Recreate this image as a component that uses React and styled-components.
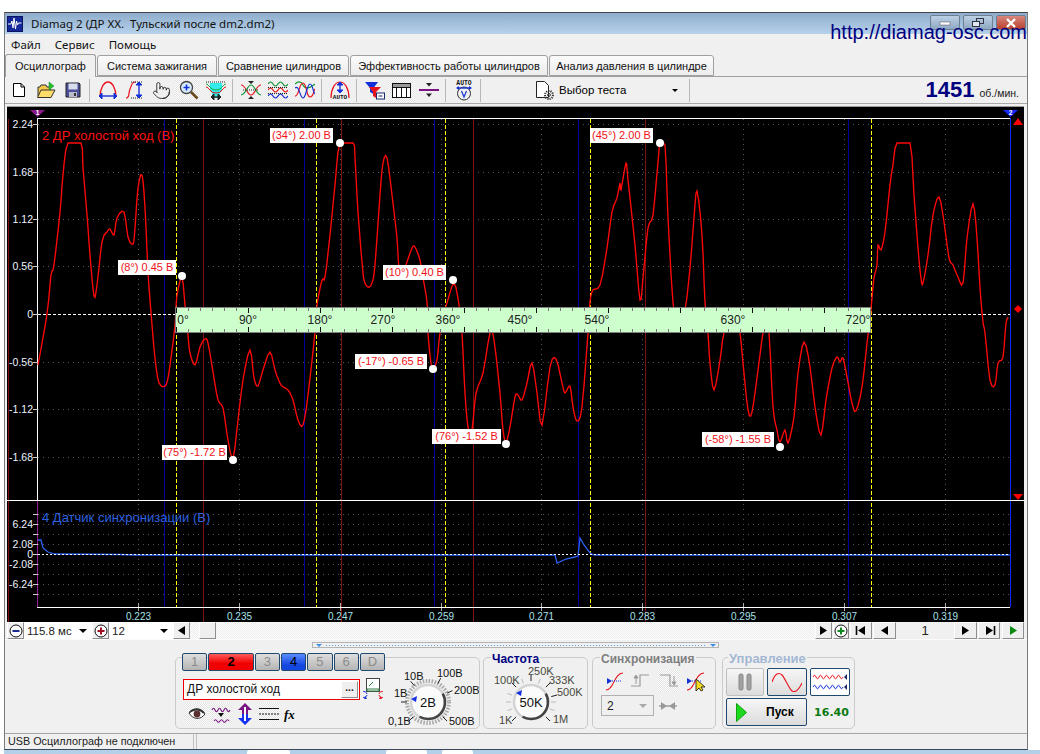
import React from "react";
import styled, { createGlobalStyle } from "styled-components";
import { Pointer } from "lucide-react";

const GlobalStyle = createGlobalStyle`
  html, body { margin: 0; padding: 0; background: #fff; }
  body { font-family: "Liberation Sans", Arial, sans-serif; font-size: 12px; color: #000; }
`;

const Page = styled.div`
  width: 1040px;
  height: 754px;
  overflow: hidden;
  padding-top: 12px;
  box-sizing: border-box;
  position: relative;
`;

const Window = styled.div`
  position: relative;
  margin-left: 4px;
  width: 1024px;
  height: 738px;
  box-sizing: border-box;
  border: 1px solid #7a7a7a;
  border-top-color: #444;
  border-bottom-color: #3a4a5a;
  background: #f0f0f0;
  display: flex;
  flex-direction: column;
`;

const TitleBar = styled.div`
  height: 21px;
  flex: none;
  display: flex;
  align-items: center;
  padding-left: 2px;
  background: linear-gradient(#8fadcc, #b6d1ea);
  font-family: "Noto Sans", sans-serif;
  font-size: 11.5px;
  color: #111;
`;
const TitleText = styled.span`
  margin-left: 8px;
  white-space: pre;
`;
const WinButtons = styled.div`
  position: absolute;
  top: 2px;
  right: 1px;
  display: flex;
  gap: 3px;
`;
const WinButton = styled.div`
  width: 30px;
  height: 15px;
  box-sizing: border-box;
  border: 1px solid #6d7f92;
  border-radius: 2px;
  display: flex;
  align-items: center;
  justify-content: center;
  background: ${(p) => (p.$close ? "linear-gradient(#d8867c, #b84030)" : "linear-gradient(#bcd0e4, #8ea8c2)")};
`;
const SiteUrl = styled.div`
  position: absolute;
  top: 7px;
  right: 0;
  font-size: 20px;
  line-height: 24px;
  color: #000080;
`;

const Menu = styled.div`
  height: 21px;
  flex: none;
  display: flex;
  align-items: center;
  gap: 14px;
  padding-left: 6px;
  font-family: "Noto Sans", sans-serif;
  font-size: 11.5px;
  color: #111;
`;

const Tabs = styled.div`
  height: 22px;
  flex: none;
  display: flex;
  align-items: flex-end;
  gap: 1px;
  box-sizing: border-box;
  border-bottom: 1px solid #a0a0a0;
`;
const Tab = styled.div`
  width: ${(p) => p.$w}px;
  height: ${(p) => (p.$active ? 23 : 21)}px;
  margin-bottom: ${(p) => (p.$active ? -1 : 0)}px;
  box-sizing: border-box;
  border: 1px solid #a0a0a0;
  border-bottom: ${(p) => (p.$active ? "none" : "1px solid #a0a0a0")};
  border-radius: 3px 3px 0 0;
  background: ${(p) => (p.$active ? "#f0f0f0" : "linear-gradient(#fbfbfb, #ececec)")};
  display: flex;
  align-items: center;
  justify-content: center;
  font-size: 11px;
  white-space: nowrap;
  color: #111;
`;

const Toolbar = styled.div`
  height: 27px;
  flex: none;
  display: flex;
  align-items: center;
  box-sizing: border-box;
  border-bottom: 1px solid #a8a8a8;
`;
const Tool = styled.div`
  width: 27px;
  height: 25px;
  flex: none;
  display: flex;
  align-items: center;
  justify-content: center;
  background: ${(p) => (p.$pressed ? "repeating-conic-gradient(#fff 0 25%, #e2e2e2 0 50%) 0 0 / 2px 2px" : "none")};
`;
const Sep = styled.div`
  width: 1px;
  height: 23px;
  flex: none;
  margin: 0 4px 0 3px;
  background: #b8b8b8;
`;
const TestPicker = styled.div`
  width: 201px;
  flex: none;
  display: flex;
  align-items: center;
  padding-left: 50px;
  box-sizing: border-box;
  gap: 3px;
  font-size: 11.5px;
`;
const Caret = styled.span`
  width: 0;
  height: 0;
  border-left: ${(p) => p.$s || 3}px solid transparent;
  border-right: ${(p) => p.$s || 3}px solid transparent;
  border-top: ${(p) => p.$s || 3}px solid ${(p) => p.$c || "#000"};
  display: block;
`;
const PickerCaret = styled.div`
  margin-left: auto;
  margin-right: 8px;
`;
const Rpm = styled.div`
  flex: 1;
  display: flex;
  justify-content: flex-end;
  align-items: baseline;
  gap: 5px;
  padding-right: 8px;
  font-size: 10.5px;
  color: #222;
`;
const RpmValue = styled.span`
  font-size: 22px;
  font-weight: 700;
  color: #000080;
  line-height: 26px;
`;

const ChartFrame = styled.div`
  position: relative;
  height: 516px;
  flex: none;
  margin: 2px 3px 0 2px;
  box-sizing: border-box;
  border-top: 1px solid #9a9a9a;
  background: #000;
`;
const ChartSvg = styled.svg`
  display: block;
  font-family: "Liberation Sans", Arial, sans-serif;
`;
const Callout = styled.div`
  position: absolute;
  left: ${(p) => p.$x - 7}px;
  top: ${(p) => p.$y - 107}px;
  width: ${(p) => p.$w}px;
  height: 15px;
  background: #fff;
  color: #f01018;
  font-size: 11px;
  line-height: 15px;
  text-align: center;
  white-space: nowrap;
`;
const TraceTitle = styled.div`
  position: absolute;
  left: 35px;
  top: ${(p) => p.$y - 107}px;
  font-size: 13px;
  line-height: 16px;
  color: ${(p) => p.$c};
  white-space: nowrap;
`;

const NavRow = styled.div`
  height: 18px;
  flex: none;
  display: flex;
  align-items: center;
  box-sizing: border-box;
  padding: 0 3px 0 2px;
  border-bottom: 1px solid #fbfbfb;
`;
const NavButton = styled.div`
  width: ${(p) => p.$w || 17}px;
  height: 17px;
  flex: none;
  margin-left: ${(p) => p.$ml || 0}px;
  box-sizing: border-box;
  background: #efefef;
  border: 1px solid;
  border-color: #fff #8e8e8e #8e8e8e #fff;
  display: flex;
  align-items: center;
  justify-content: center;
`;
const SizeSelect = styled.div`
  width: ${(p) => p.$w}px;
  height: 17px;
  flex: none;
  display: flex;
  align-items: center;
  justify-content: space-between;
  box-sizing: border-box;
  padding: 0 5px 0 3px;
  background: #fff;
  font-size: 11.5px;
  color: #222;
`;
const Track = styled.div`
  flex: 1;
  height: 17px;
  padding-left: 9px;
  background: repeating-conic-gradient(#fff 0 25%, #ececec 0 50%) 0 0 / 2px 2px;
`;
const PageNum = styled.div`
  width: 58px;
  flex: none;
  text-align: center;
  font-size: 13px;
  color: #222;
`;

const Panel = styled.div`
  height: 93px;
  flex: none;
`;
const Splitter = styled.div`
  margin: 2px 0 0 307px;
  width: 407px;
  height: 6px;
  box-sizing: border-box;
  border: 1px solid #b4b4b4;
  display: flex;
  align-items: center;
  justify-content: space-between;
  padding: 0 2px 0 3px;
  gap: 4px;
`;
const SplitDots = styled.div`
  flex: 1;
  height: 1px;
  background: repeating-linear-gradient(90deg, #6aa0e0 0 1px, transparent 1px 3px);
`;
const Groups = styled.div`
  display: flex;
  margin: 9px 0 0 170px;
`;
const Group = styled.div`
  position: relative;
  width: ${(p) => p.$w}px;
  height: 72px;
  margin-left: ${(p) => p.$ml || 0}px;
  box-sizing: border-box;
  border: 1px solid #cbcbcb;
  border-radius: 5px;
`;
const Legend = styled.div`
  position: absolute;
  left: ${(p) => p.$x}px;
  top: -6px;
  padding: 0 1px;
  background: #f0f0f0;
  font-size: ${(p) => p.$fs || 12}px;
  line-height: 14px;
  font-weight: 700;
  color: ${(p) => p.$c};
  white-space: nowrap;
`;
const ChannelGroup = styled(Group)`
  display: flex;
`;
const ChannelCol = styled.div`
  width: 209px;
  flex: none;
  padding-left: 6px;
  box-sizing: border-box;
`;
const ChannelRow = styled.div`
  display: flex;
  gap: 1px;
  margin-top: -5px;
`;
const Channel = styled.div`
  width: ${(p) => (p.$wide ? 47 : 26)}px;
  height: 18px;
  box-sizing: border-box;
  border: 1px solid #1d4a6e;
  border-radius: 2px;
  background: ${(p) =>
    p.$color === "red"
      ? "linear-gradient(#ff5a5a, #f00000 60%)"
      : p.$color === "blue"
        ? "linear-gradient(#5a8cff, #1446e0 70%)"
        : "linear-gradient(#dedede, #b4b4b4)"};
  color: ${(p) => (p.$color ? "#000" : "#8c8c8c")};
  font-weight: ${(p) => (p.$color === "red" ? 700 : 400)};
  font-size: 13px;
  line-height: 16px;
  text-align: center;
`;
const NameRow = styled.div`
  display: flex;
  align-items: center;
  margin-top: 7px;
  gap: 3px;
`;
const NameField = styled.div`
  width: 177px;
  height: 21px;
  margin-left: 1px;
  box-sizing: border-box;
  border: 1px solid #f00000;
  background: #fff;
  display: flex;
  align-items: center;
  justify-content: space-between;
  padding: 0 1px 0 3px;
  font-size: 12px;
  color: #111;
`;
const DotsButton = styled.div`
  width: 17px;
  height: 17px;
  box-sizing: border-box;
  background: #efefef;
  border: 1px solid;
  border-color: #fff #8e8e8e #8e8e8e #fff;
  font-size: 10px;
  font-weight: 700;
  line-height: 11px;
  text-align: center;
`;
const IconRow = styled.div`
  display: flex;
  align-items: center;
  gap: 1px;
  margin: 3px 0 0 3px;
`;
const SmallTool = styled(Tool)`
  width: ${(p) => p.$w || 23}px;
  height: 22px;
`;
const KnobSvg = styled.svg`
  display: block;
  flex: none;
  font-family: "Liberation Sans", Arial, sans-serif;
`;
const SyncIcons = styled.div`
  display: flex;
  align-items: center;
  margin: 12px 0 0 12px;
  gap: 6px;
`;
const SyncRow = styled.div`
  display: flex;
  align-items: center;
  gap: 5px;
  margin: 3px 0 0 8px;
`;
const SyncSelect = styled.div`
  width: 53px;
  height: 21px;
  box-sizing: border-box;
  border: 1px solid #b0b0b0;
  display: flex;
  align-items: center;
  justify-content: space-between;
  padding: 0 6px 0 5px;
  font-size: 12px;
  color: #222;
`;
const ControlGrid = styled.div`
  display: grid;
  grid-template-columns: 38px 40px 40px;
  grid-auto-rows: 28px;
  column-gap: 3px;
  row-gap: 2px;
  padding: 10px 0 0 3px;
`;
const ControlButton = styled.div`
  box-sizing: border-box;
  border: 1px solid ${(p) => (p.$off ? "#c0c0c0" : "#1d4a6e")};
  border-radius: 2px;
  background: ${(p) => (p.$wave ? "#fff" : "linear-gradient(#f6f6f6, #dcdcdc)")};
  display: flex;
  align-items: center;
  justify-content: center;
`;
const StartButton = styled(ControlButton)`
  grid-column: span 2;
  justify-content: flex-start;
  gap: 19px;
  padding-left: 9px;
  font-weight: 700;
  font-size: 12px;
`;
const Elapsed = styled.div`
  display: flex;
  align-items: center;
  justify-content: center;
  padding-left: 3px;
  font-family: "DejaVu Sans", sans-serif;
  font-size: 11px;
  font-weight: 700;
  color: #0a7a10;
`;

const StatusBar = styled.div`
  height: 16px;
  flex: 1;
  display: flex;
  box-sizing: border-box;
  border-top: 1px solid #a6a6a6;
  font-size: 10.8px;
  line-height: 15px;
  color: #222;
`;
const StatusCell = styled.div`
  width: 189px;
  flex: none;
  padding-left: 3px;
  border-right: 1px solid #c0c0c0;
  margin-right: 2px;
  box-sizing: border-box;
`;
const StatusRest = styled.div`
  flex: 1;
  border-left: 1px solid #c0c0c0;
`;
const Taskbar = styled.div`
  height: 4px;
  margin-left: 4px;
  display: flex;
  background: #b4cfe8;
`;
const TaskItem = styled.div`
  width: ${(p) => p.$w}px;
  margin-left: ${(p) => p.$ml}px;
  background: #fff;
  border-radius: 2px 2px 0 0;
`;

/* toolbar icons */
const Ic = ({ w = 20, h = 18, children }) => (
  <svg width={w} height={h} viewBox={`0 0 ${w} ${h}`} fill="none" strokeWidth="1">
    {children}
  </svg>
);
const arrowV = (x, y1, y2, c) => (
  <g stroke={c} fill={c}>
    <path d={`M${x} ${y1 + 2}V${y2 - 2}`} strokeWidth="1.4" />
    <path d={`M${x - 3} ${y1 + 3}L${x} ${y1}L${x + 3} ${y1 + 3}z M${x - 3} ${y2 - 3}L${x} ${y2}L${x + 3} ${y2 - 3}z`} />
  </g>
);
const arrowH = (y, x1, x2, c) => (
  <g stroke={c} fill={c}>
    <path d={`M${x1 + 2} ${y}H${x2 - 2}`} strokeWidth="1.4" />
    <path d={`M${x1 + 3} ${y - 3}L${x1} ${y}L${x1 + 3} ${y + 3}z M${x2 - 3} ${y - 3}L${x2} ${y}L${x2 - 3} ${y + 3}z`} />
  </g>
);
const wave = (x, y, n, a, s) => {
  let d = `M${x} ${y}`;
  for (let i = 0; i < n; i++) d += `q${s / 2} ${i % 2 ? a : -a} ${s} 0`;
  return d;
};

const NewIcon = () => (
  <Ic w={14} h={16}>
    <path d="M1.5 1.5h7.5l3.5 3.5v9.5h-11z" fill="#fff" stroke="#000" />
    <path d="M9 1.5v3.5h3.5" stroke="#000" />
  </Ic>
);
const OpenIcon = () => (
  <Ic w={20} h={18}>
    <path d="M2 15V6h2l1-2h5l1 2h3v3" fill="#f4c94a" stroke="#333" />
    <path d="M1.5 16.5L5 9h14l-4 7.5z" fill="#ffdb6a" stroke="#333" />
    <path d="M13 1l5 4-5 4z" fill="#24c22e" stroke="#128018" strokeWidth=".5" />
  </Ic>
);
const SaveIcon = () => (
  <Ic w={16} h={16}>
    <path d="M1 1h13l1 1v13H1z" fill="#4a4f96" stroke="#222" />
    <rect x="3.5" y="1.5" width="9" height="6" fill="#d8dcec" />
    <rect x="4" y="10" width="8" height="5" fill="#b8bccc" />
    <rect x="9" y="11" width="2" height="3" fill="#333" />
  </Ic>
);
const ArcWidthIcon = () => (
  <Ic w={20} h={20}>
    <path d="M2 17C2 8 6 2 10 2s8 6 8 15" stroke="#e8141c" strokeWidth="1.3" />
    {arrowH(16, 1, 19, "#1430d8")}
  </Ic>
);
const RiseHeightIcon = () => (
  <Ic w={20} h={20}>
    <path d="M1 18c4 0 2-4 4-9s2-7 6-7" stroke="#e8141c" strokeWidth="1.2" />
    <path d="M6 2h11M6 18h11" stroke="#222" strokeDasharray="1 1" />
    {arrowV(14, 2, 18, "#1430d8")}
  </Ic>
);
const ZoomIcon = () => (
  <Ic w={20} h={20}>
    <path d="M12 12l6.500 6.500" stroke="#6b4a1e" strokeWidth="2.6" />
    <circle cx="7.5" cy="7.5" r="6" fill="#d8ecfa" stroke="#444" strokeWidth="1.3" />
    <path d="M4.5 7.5h6M7.5 4.5v6" stroke="#1430d8" strokeWidth="1.6" />
  </Ic>
);
const SpanIcon = () => (
  <Ic w={20} h={20}>
    <path d="M4 3h12v7l-2 3v5H6v-5L4 10z" fill="#32ecec" />
    <path d="M0 4c3 0 4 6 10 6s7-6 10-6" stroke="#18a840" />
    <path d="M0 7c3 0 4 6 10 6s7-6 10-6" stroke="#e8141c" />
    <path d="M0 2h20" stroke="#222" strokeDasharray="1 1" />
    {arrowH(17, 5, 15, "#222")}
  </Ic>
);
const CrossIcon = () => (
  <Ic w={20} h={20}>
    <path d="M0 5c5 0 6 10 10 10s5-10 10-10" stroke="#e8141c" strokeWidth="1.2" />
    <path d="M0 15c5 0 6-10 10-10s5 10 10 10" stroke="#109838" strokeWidth="1.2" />
    <path d="M7 1h6l-3 3zM7 19h6l-3-3z" fill="#222" />
    <path d="M2 10h16" stroke="#222" strokeDasharray="1 1" />
  </Ic>
);
const StackIcon = () => (
  <Ic w={20} h={20}>
    <path d={wave(0, 4, 4, 4, 5)} stroke="#109838" strokeWidth="1.2" />
    <path d={wave(0, 10, 4, 4, 5)} stroke="#e8141c" strokeWidth="1.2" />
    <path d={wave(0, 16, 4, 4, 5)} stroke="#1430d8" strokeWidth="1.2" />
    <path d="M0 7.500h20M0 13.500h20" stroke="#222" strokeDasharray="1 1" />
  </Ic>
);
const OverlayIcon = () => (
  <Ic w={20} h={20}>
    <path d="M0 4c3-3 6-3 8 1s6 4 12-1" stroke="#109838" strokeWidth="1.2" />
    <path d="M0 16c4 1 4-13 8-13s3 14 7 14 3-6 5-8" stroke="#e8141c" strokeWidth="1.2" />
    <path d="M0 8c4-4 5 10 8 10s4-14 7-14 3 9 5 10" stroke="#1430d8" strokeWidth="1.2" />
  </Ic>
);
const AutoArcIcon = () => (
  <Ic w={20} h={20}>
    <path d="M1 18C1 9 5 2 10 2s9 7 9 16" stroke="#e8141c" strokeWidth="1.2" />
    {arrowV(10, 2, 13, "#1430d8")}
    <text x="10" y="19" textAnchor="middle" fontSize="6" fontWeight="700" fill="#111" fontFamily="Liberation Mono">AUTO</text>
  </Ic>
);
const FilterIcon = () => (
  <Ic w={21} h={19}>
    <path d="M1 1h13L9.500 7v6L6 11V7z" fill="#1430d8" />
    <path d="M5 6h12l-5 5v6l-3-2v-4z" fill="#e8141c" />
    <rect x="12.5" y="12" width="8" height="6" fill="#fff" stroke="#1a2a6a" />
    <path d="M14.500 15h4" stroke="#1a2a6a" />
  </Ic>
);
const GridIcon = () => (
  <Ic w={19} h={15}>
    <rect x=".5" y=".5" width="18" height="14" stroke="#111" fill="#fff" />
    <path d="M.5 4.500h18M4.500 .5v14M9.500 .5v14M14.500 .5v14" stroke="#111" />
    <path d="M1 1h17v3H1z" fill="#999" />
  </Ic>
);
const DivideIcon = () => (
  <Ic w={20} h={16}>
    <path d="M0 8h20" stroke="#7a1482" strokeWidth="2" />
    <path d="M7 1h6l-3 3.500zM7 11.500h6l-3 3.500z" fill="#222" />
  </Ic>
);
const AutoVoltIcon = () => (
  <Ic w={20} h={22}>
    <text x="10" y="5.500" textAnchor="middle" fontSize="6.400" fontWeight="700" fill="#111" fontFamily="Liberation Mono">AUTO</text>
    <circle cx="10" cy="14.500" r="6.500" stroke="#333" fill="#eee" />
    <path d="M7.500 12l2.500 6 2.500-6" stroke="#1430d8" strokeWidth="1.2" />
    <path d="M3 9h14" stroke="#1430d8" strokeWidth="1.4" />
    <path d="M2 9l3-2v4zM18 9l-3-2v4z" fill="#1430d8" />
  </Ic>
);
const TestIcon = () => (
  <Ic w={21} h={21}>
    <path d="M1.500 1.500h8l4 4v12h-12z" fill="#fff" stroke="#222" />
    <circle cx="14" cy="15" r="4" stroke="#333" strokeWidth="2" strokeDasharray="1.2 1" />
    <circle cx="14" cy="15" r="1.400" stroke="#333" />
  </Ic>
);
const RoundIcon = ({ color, plus }) => (
  <Ic w={14} h={14}>
    <circle cx="7" cy="7" r="6" fill="#fff" stroke="#111" />
    <path d={plus ? "M3.500 7h7M7 3.500v7" : "M3.500 7h7"} stroke={color} strokeWidth="2" />
  </Ic>
);
const Tri = ({ dir = "r", bar, c = "#000" }) => (
  <Ic w={13} h={11}>
    {dir === "r" ? <path d="M3 1l7 4.500L3 10z" fill={c} /> : <path d="M10 1L3 5.500l7 4.500z" fill={c} />}
    {bar && <path d={dir === "r" ? "M11.500 1v9" : "M1.500 1v9"} stroke={c} strokeWidth="1.6" />}
  </Ic>
);

const EyeIcon = () => (
  <Ic w={18} h={14}>
    <path d="M1 6c4-5 12-5 16 1-4 6-12 6-16-1z" fill="#fff" stroke="#333" />
    <circle cx="9" cy="7" r="3.400" fill="#5a3030" />
    <path d="M1 5c4-5 12-5 16 1l-2 .5C11 2 6 3 2 6z" fill="#333" />
  </Ic>
);
const PurpleWaveIcon = () => (
  <Ic w={20} h={19}>
    <path d={wave(1, 5, 6, 3.5, 3)} stroke="#7a1482" strokeWidth="1.1" />
    <path d={wave(3, 16, 5, 2.5, 3)} stroke="#7a1482" strokeWidth="1.1" />
    <path d="M7 8h6l-3 4z" fill="#111" />
  </Ic>
);
const VArrowsIcon = () => (
  <Ic w={16} h={22}>
    <path d="M8 0L15 7h-4v4H5V7H1z" fill="#7a1482" />
    <path d="M8 22L15 15h-4v-4H5v4H1z" fill="#1430f0" />
    <path d="M7 4h2v14H7z" fill="#fff" />
  </Ic>
);
const LinesIcon = () => (
  <Ic w={20} h={16}>
    <path d="M0 2.500h20M0 13.500h20" stroke="#111" />
    <path d="M0 8h20" stroke="#111" strokeDasharray="2 1" />
  </Ic>
);
const ProbeIcon = () => (
  <Ic w={20} h={22}>
    <rect x="3.500" y=".5" width="13" height="13" fill="#fff" stroke="#444" />
    <path d="M6 8l4-4M4 11h12v2H4z" stroke="#2a7a40" />
    <path d="M4 16a3 3 0 1 0 0 1" stroke="#1430d8" />
    <path d="M16 16a3 3 0 1 1 0 1" stroke="#e8141c" />
    <path d="M4 21H1l1.500-3z" fill="#1430d8" />
    <path d="M16 21h3l-1.500-3z" fill="#e8141c" />
  </Ic>
);
const EdgeIcon = ({ kind, dim }) => {
  const c = dim ? "#9a9a9a" : "#e8141c";
  return (
    <Ic w={20} h={22}>
      {kind === "rise" && (
        <>
          <path d="M1 20c8 0 8-17 17-17" stroke={c} strokeWidth="1.1" />
          <path d="M2 8l5 3-5 3z" fill="#1430d8" />
          <path d="M7 11h9" stroke="#1430d8" strokeDasharray="1 1" />
        </>
      )}
      {kind === "up" && (
        <>
          <path d="M0 16h9V5h9" stroke={c} strokeWidth="1.2" />
          <path d="M5 14V6M3 8l2-3 2 3z" stroke={c} fill={c} />
        </>
      )}
      {kind === "down" && (
        <>
          <path d="M1 5h10v11h8" stroke={c} strokeWidth="1.2" />
          <path d="M15 6v8M13 12l2 3 2-3z" stroke={c} fill={c} />
        </>
      )}
      {kind === "cursor" && (
        <>
          <path d="M1 20c8 0 8-17 17-17" stroke={c} strokeWidth="1.1" />
          <path d="M1 8l5 3-5 3z" fill="#1430d8" />
          <path d="M6 11h9" stroke="#1430d8" strokeDasharray="1 1" />
          <path d="M10 9v12l3-3 2 3 2-1-2-3h4z" fill="#f4d820" stroke="#111" strokeWidth=".8" />
        </>
      )}
    </Ic>
  );
};
const PinchIcon = () => (
  <Ic w={18} h={10}>
    <path d="M0 5h18" stroke="#999" strokeWidth="1.4" />
    <path d="M2 1l6 4-6 4zM16 1l-6 4 6 4z" fill="#999" />
  </Ic>
);
const PauseIcon = () => (
  <Ic w={14} h={18}>
    <rect x="1" y="1" width="4" height="16" rx="1.5" fill="#a2a2a2" stroke="#888" />
    <rect x="9" y="1" width="4" height="16" rx="1.5" fill="#a2a2a2" stroke="#888" />
  </Ic>
);
const SineIcon = () => (
  <Ic w={30} h={20}>
    <path d="M0 10C3 1 7 0 10 3s7 14 10 16 7-1 10-8" stroke="#e8141c" strokeWidth="1.1" />
  </Ic>
);
const WavesIcon = () => (
  <Ic w={36} h={22}>
    <path d={wave(1, 6, 10, 3.5, 3)} stroke="#e8141c" />
    <path d={wave(1, 16, 10, 3.5, 3)} stroke="#1430d8" />
    <path d="M35 3v6l-3-3zM35 13v6l-3-3z" fill="#1d2a6a" />
  </Ic>
);
const PlayBig = () => (
  <svg width="11" height="19" viewBox="0 0 11 19">
    <path d="M.5 .5l10 9-10 9z" fill="#1ed81e" stroke="#10a010" />
  </svg>
);

/* app icon */
const AppIcon = () => (
  <Ic w={16} h={16}>
    <rect x=".5" y=".5" width="15" height="15" fill="#14289a" stroke="#0c1660" />
    <path d="M1 8h3l1-3 1 7 1-10 1.500 11 1-8 1 4 1-2h3" stroke="#fff" />
  </Ic>
);

/* chart data, all in page pixels */
const RED_POINTS =
  "38,365 47,314 51,275 54,265 60,212 63,175 68,143 81,143 83,168 87,215 90,255 94,296 97,285 102,242 107,232 110,229 114,235 117,218 124,212 128,237 133,244 135,228 138,188 142,175 145,208 148,272 152,325 155,358 159,383 166,385 170,365 175,325 177,295 182,278 185,305 188,335 190,353 195,365 200,347 205,339 208,343 213,372 218,400 223,408 228,440 233,458 238,420 243,380 250,350 254,378 258,386 263,370 270,352 275,370 281,385 288,390 293,400 298,420 303,425 308,395 315,332 317,305 322,280 325,277 330,235 335,185 340,143 353,143 355,158 358,212 362,262 364,280 368,287 372,283 375,265 380,195 383,163 387,158 392,195 397,238 399,268 403,272 407,262 412,248 415,247 420,260 423,278 427,302 428,333 431,363 433,368 437,360 440,333 445,310 447,303 454,283 459,305 462,333 465,393 468,427 472,430 476,393 483,373 490,333 494,340 500,393 503,430 506,442 510,427 515,397 518,395 522,400 527,383 532,363 537,393 542,425 550,367 556,359 562,383 565,393 570,386 573,407 577,421 582,407 588,333 590,302 593,290 600,285 607,248 612,212 617,198 620,183 621,190 626,163 628,180 635,245 640,300 643,278 648,228 653,215 658,162 660,145 665,145 668,218 673,302 678,330 685,310 690,268 694,218 697,191 702,235 705,302 708,333 710,363 714,390 720,360 724,333 730,325 736,325 740,333 743,363 748,410 752,412 758,370 763,333 766,331 769,333 773,407 777,430 780,442 785,430 788,443 794,417 798,373 804,342 810,367 815,407 821,435 826,400 832,368 837,357 840,362 843,358 847,377 852,403 856,411 862,387 867,343 870,320 872,298 874,278 877,265 878,245 881,250 885,232 890,185 893,165 897,143 910,143 914,195 918,248 921,278 923,283 928,255 933,215 939,197 944,222 949,258 953,265 958,277 963,283 967,238 973,204 977,238 980,288 983,322 985,333 990,380 995,385 998,363 1003,357 1006,323 1009,317"
    .split(" ")
    .map((p) => p.split(",").map(Number));

// Catmull-Rom resample so the trace reads as a curve, clamped at the clipping level
const smooth = (pts, top) => {
  const out = [];
  for (let i = 0; i < pts.length - 1; i++) {
    const p0 = pts[Math.max(i - 1, 0)];
    const p1 = pts[i];
    const p2 = pts[i + 1];
    const p3 = pts[Math.min(i + 2, pts.length - 1)];
    for (let t = 0; t < 1; t += 0.34) {
      const t2 = t * t;
      const t3 = t2 * t;
      const f = (a, b, c, d) => 0.5 * (2 * b + (c - a) * t + (2 * a - 5 * b + 4 * c - d) * t2 + (3 * b - a - 3 * c + d) * t3);
      out.push(`${f(p0[0], p1[0], p2[0], p3[0]).toFixed(1)},${Math.max(f(p0[1], p1[1], p2[1], p3[1]), top).toFixed(1)}`);
    }
  }
  return out.join(" ");
};
const RED_TRACE = smooth(RED_POINTS, 143);
const BLUE_TRACE =
  "38,540 41,540 43,548 48,552 55,554 120,554.5 135,555 555,555 557,563 566,559 575,557 578,556 580,538 584,545 590,553 594,555 1010,555";

const V_BLUE = [164, 304, 434, 578, 848];
const V_YELLOW = [176, 316, 445, 590, 871];
const V_DARKRED = [8, 203, 341, 473, 645];
const TIME_TICKS = [
  [138, "0.223"], [239, "0.235"], [340, "0.247"], [441, "0.259"], [541, "0.271"],
  [642, "0.283"], [743, "0.295"], [844, "0.307"], [945, "0.319"],
];
const UPPER_Y = [[124, "2.24"], [172, "1.68"], [219, "1.12"], [266, "0.56"], [362, "-0.56"], [409, "-1.12"], [457, "-1.68"]];
const LOWER_Y = [[514], [524, "6.24"], [534], [544, "2.08"], [564, "-2.08"], [574], [584, "-6.24"], [594]];
const DEGREES = [
  [183, "0°"], [248, "90°"], [320, "180°"], [383, "270°"], [448, "360°"],
  [520, "450°"], [597, "540°"], [733, "630°"], [858, "720°"],
];
const MARKERS = [[182, 276], [340, 143], [453, 280], [660, 143], [433, 369], [506, 444], [233, 460], [780, 447]];
const CALLOUTS = [
  [118, 260, 58, "(8°) 0.45 В"],
  [270, 128, 63, "(34°) 2.00 В"],
  [383, 265, 63, "(10°) 0.40 В"],
  [590, 128, 63, "(45°) 2.00 В"],
  [355, 354, 72, "(-17°) -0.65 В"],
  [432, 429, 69, "(76°) -1.52 В"],
  [162, 445, 65, "(75°) -1.72 В"],
  [702, 432, 72, "(-58°) -1.55 В"],
];

const Chart = () => {
  const barTicks = [];
  for (let x = 176, i = 0; x < 871; x += 12, i++) barTicks.push([x, i % 6 === 0]);
  return (
    <ChartSvg width="1017" height="515" viewBox="7 107 1017 515">
      <g shapeRendering="crispEdges">
        {UPPER_Y.map(([y]) => (
          <path key={y} d={`M38 ${y + 0.5}H1010`} stroke="#555" strokeDasharray="1 4" />
        ))}
        {LOWER_Y.map(([y]) => (
          <path key={y} d={`M38 ${y + 0.5}H1010`} stroke="#555" strokeDasharray="1 4" />
        ))}
        {TIME_TICKS.map(([x]) => (
          <g key={x}>
            <path d={`M${x + 0.5} 119V603`} stroke="#555" strokeDasharray="1 4" />
            <path d={`M${x + 0.5} 603V611`} stroke="#aaa" />
          </g>
        ))}
        {V_DARKRED.map((x) => (
          <path key={x} d={`M${x + 0.5} 119V622`} stroke="#801010" />
        ))}
        {V_BLUE.map((x) => (
          <path key={x} d={`M${x + 0.5} 119V607`} stroke="#000098" />
        ))}
        {V_YELLOW.map((x) => (
          <path key={x} d={`M${x + 0.5} 119V607`} stroke="#ffff00" strokeDasharray="4 2" />
        ))}
        <path d="M38 314.5H1010" stroke="#fff" strokeDasharray="3 2" />
        <path d="M37.5 119V607" stroke="#fff" />
        <path d="M37.5 500V607" stroke="#9a1a9a" />
        <path d="M1010.5 118V607" stroke="#1428ff" strokeWidth="1.5" />
        <path d="M37 118.5H1010M7 500.5H1024M37 607.5H1010" stroke="#fff" />
        {[...UPPER_Y, [314, "0"]].map(([y]) => (
          <path key={y} d={`M33 ${y + 0.5}H38`} stroke="#ccc" />
        ))}
        {[...LOWER_Y, [554, "0"]].map(([y]) => (
          <path key={y} d={`M33 ${y + 0.5}H38`} stroke="#ccc" />
        ))}
      </g>

      <polyline points={RED_TRACE} fill="none" stroke="#ff0808" strokeWidth="1.35" />
      <polyline points={BLUE_TRACE} fill="none" stroke="#2c62f0" strokeWidth="1.3" />
      <path d="M38 554.5H1010" stroke="#fff" strokeDasharray="2 2" strokeWidth="1" shapeRendering="crispEdges" />

      <g shapeRendering="crispEdges">
        <rect x="175.5" y="307.5" width="695" height="25" fill="#ccffcc" stroke="#808080" />
        {barTicks.map(([x, big]) => (
          <path key={x} d={`M${x + 0.5} 308V${big ? 313 : 311}M${x + 0.5} ${big ? 327 : 329}V332`} stroke={big ? "#111" : "#777"} />
        ))}
      </g>
      {DEGREES.map(([x, t]) => (
        <text key={t} x={x} y="324" textAnchor="middle" fontSize="12" fill="#222">{t}</text>
      ))}

      {MARKERS.map(([x, y]) => (
        <circle key={x} cx={x} cy={y} r="4" fill="#fff" />
      ))}

      {[...UPPER_Y, [314, "0"], ...LOWER_Y, [554, "0"]].filter(([, t]) => t).map(([y, t]) => (
        <text key={y} x="33" y={y + 4} textAnchor="end" fontSize="10.5" fill="#eef4ff">{t}</text>
      ))}
      {TIME_TICKS.map(([x, t]) => (
        <text key={t} x={x + 0.5} y="620" textAnchor="middle" fontSize="10" fill="#a8e0e8">{t}</text>
      ))}

      <path d="M30 110h15l-7.5 7z" fill="#8a1a8a" />
      <text x="37.5" y="115" textAnchor="middle" fontSize="6.5" fontWeight="700" fill="#fff">1</text>
      <path d="M1003 110h15l-7.5 7z" fill="#1428ff" />
      <text x="1010.5" y="115" textAnchor="middle" fontSize="6.5" fontWeight="700" fill="#fff">2</text>
      <path d="M1013 125l5-7 5 7z" fill="#f00" />
      <path d="M1018 305l4 4-4 4-4-4z" fill="#f00" />
      <path d="M1013 494h10l-5 6z" fill="#f00" />
    </ChartSvg>
  );
};

const polar = (cx, cy, r, deg) => [cx + r * Math.cos((deg * Math.PI) / 180), cy - r * Math.sin((deg * Math.PI) / 180)];

const Knob = ({ w, h, cx, cy, value, labels, ticks, minor, ring, pointer, labelColor }) => {
  const [ax, ay] = polar(cx, cy, 17, 30);
  const [bx, by] = polar(cx, cy, 17, 240);
  return (
    <KnobSvg width={w} height={h} viewBox={`0 0 ${w} ${h}`}>
      {ring && <circle cx={cx} cy={cy} r="21" fill="none" stroke="#a8a8a8" strokeWidth="4" strokeDasharray="1.5 1.5" />}
      {minor.map((a) => {
        const [x1, y1] = polar(cx, cy, 20, a);
        const [x2, y2] = polar(cx, cy, 25, a);
        return <line key={a} x1={x1} y1={y1} x2={x2} y2={y2} stroke="#bbb" />;
      })}
      {ticks.map((a) => {
        const [x1, y1] = polar(cx, cy, 21, a);
        const [x2, y2] = polar(cx, cy, 27, a);
        return <line key={a} x1={x1} y1={y1} x2={x2} y2={y2} stroke="#222" />;
      })}
      <circle cx={cx} cy={cy} r="17" fill="#fbfbfb" stroke="#d4d4d4" strokeWidth="2.5" />
      <path d={`M${ax} ${ay}A17 17 0 0 1 ${bx} ${by}`} fill="none" stroke="#444" strokeWidth="2.5" />
      <path d={`M${pointer[0]} ${pointer[1]}l6 -3 -1 6z`} fill="#1430e0" />
      <text x={cx} y={cy + 5} textAnchor="middle" fontSize="13" fill="#111">{value}</text>
      {labels.map(([t, x, y]) => (
        <text key={t} x={x} y={y} fontSize="11" fill={labelColor}>{t}</text>
      ))}
    </KnobSvg>
  );
};

const VOLT_LABELS = [
  ["0,1В", 3, 67], ["1В", 9, 39], ["10В", 19, 22], ["100В", 52, 19], ["200В", 69, 36], ["500В", 64, 67],
];
const FREQ_LABELS = [
  ["100K", 10, 26], ["250K", 44, 17], ["333K", 65, 26], ["500K", 73, 38], ["1K", 15, 66], ["1M", 69, 65],
];

const TOP_TOOLS = [
  [<NewIcon />], [<OpenIcon />], [<SaveIcon />], "sep",
  [<ArcWidthIcon />], [<RiseHeightIcon />], [<Pointer size={19} strokeWidth={1} color="#111" />], [<ZoomIcon />, true], [<SpanIcon />], "sep",
  [<CrossIcon />], [<StackIcon />, true], [<OverlayIcon />], "sep",
  [<AutoArcIcon />], "sep",
  [<FilterIcon />], [<GridIcon />, true], [<DivideIcon />], "sep",
  [<AutoVoltIcon />], "sep",
];

export default function App() {
  return (
    <Page>
      <GlobalStyle />
      <Window>
        <TitleBar>
          <AppIcon />
          <TitleText>Diamag 2 (ДР ХХ.  Тульский после dm2.dm2)</TitleText>
        </TitleBar>
        <WinButtons>
          <WinButton>
            <svg width="12" height="6"><rect x="1" y="2" width="10" height="3" fill="#fff" stroke="#556" strokeWidth=".5" /></svg>
          </WinButton>
          <WinButton>
            <svg width="12" height="10" fill="none" stroke="#334"><rect x="4.5" y=".5" width="7" height="5" /><rect x=".5" y="3.5" width="7" height="5" fill="#dfe8f2" /></svg>
          </WinButton>
          <WinButton $close>
            <svg width="12" height="10"><path d="M2 1l8 8M10 1l-8 8" stroke="#fff" strokeWidth="2.4" /></svg>
          </WinButton>
        </WinButtons>
        <SiteUrl>http://diamag-osc.com</SiteUrl>

        <Menu>
          <span>Файл</span>
          <span>Сервис</span>
          <span>Помощь</span>
        </Menu>

        <Tabs>
          <Tab $w={91} $active>Осциллограф</Tab>
          <Tab $w={120}>Система зажигания</Tab>
          <Tab $w={131}>Сравнение цилиндров</Tab>
          <Tab $w={198}>Эффективность работы цилиндров</Tab>
          <Tab $w={165}>Анализ давления в цилиндре</Tab>
        </Tabs>

        <Toolbar>
          {TOP_TOOLS.map((t, i) =>
            t === "sep" ? <Sep key={i} /> : <Tool key={i} $pressed={t[1]}>{t[0]}</Tool>
          )}
          <TestPicker>
            <TestIcon />
            <span>Выбор теста</span>
            <PickerCaret><Caret /></PickerCaret>
          </TestPicker>
          <Sep />
          <Rpm>
            <RpmValue>1451</RpmValue>
            <span>об./мин.</span>
          </Rpm>
        </Toolbar>

        <ChartFrame>
          <Chart />
          <TraceTitle $y={128} $c="#ff1010">2 ДР холостой ход (В)</TraceTitle>
          <TraceTitle $y={510} $c="#2f62e0">4 Датчик синхронизации (В)</TraceTitle>
          {CALLOUTS.map(([x, y, w, t]) => (
            <Callout key={t} $x={x} $y={y} $w={w}>{t}</Callout>
          ))}
        </ChartFrame>

        <NavRow>
          <NavButton><RoundIcon color="#1a2a8a" /></NavButton>
          <SizeSelect $w={68}>115.8 мс<Caret $s={4} /></SizeSelect>
          <NavButton><RoundIcon color="#a01020" plus /></NavButton>
          <SizeSelect $w={64}>12<Caret $s={4} /></SizeSelect>
          <NavButton><Tri dir="l" /></NavButton>
          <Track><NavButton /></Track>
          <NavButton><Tri /></NavButton>
          <NavButton $ml={1} $w={16}><RoundIcon color="#108a20" plus /></NavButton>
          <NavButton $ml={1} $w={22}><Tri dir="l" bar /></NavButton>
          <NavButton $ml={1} $w={23}><Tri dir="l" /></NavButton>
          <PageNum>1</PageNum>
          <NavButton $w={23}><Tri /></NavButton>
          <NavButton $ml={1} $w={22}><Tri bar /></NavButton>
          <NavButton $ml={2} $w={22}><Tri c="#0a8a10" /></NavButton>
        </NavRow>

        <Panel>
          <Splitter>
            <Caret $s={3} $c="#3a90e8" />
            <SplitDots />
            <Caret $s={3} $c="#3a90e8" />
          </Splitter>
          <Groups>
            <ChannelGroup $w={305}>
              <ChannelCol>
                <ChannelRow>
                  <Channel>1</Channel>
                  <Channel $wide $color="red">2</Channel>
                  <Channel>3</Channel>
                  <Channel $color="blue">4</Channel>
                  <Channel>5</Channel>
                  <Channel>6</Channel>
                  <Channel>D</Channel>
                </ChannelRow>
                <NameRow>
                  <NameField>
                    ДР холостой ход
                    <DotsButton>...</DotsButton>
                  </NameField>
                  <ProbeIcon />
                </NameRow>
                <IconRow>
                  <SmallTool $pressed><EyeIcon /></SmallTool>
                  <SmallTool $pressed><PurpleWaveIcon /></SmallTool>
                  <SmallTool><VArrowsIcon /></SmallTool>
                  <SmallTool $pressed><LinesIcon /></SmallTool>
                  <SmallTool $w={20}>
                    <svg width="16" height="16"><text x="1" y="13" fontFamily="Liberation Serif" fontStyle="italic" fontWeight="700" fontSize="13">fx</text></svg>
                  </SmallTool>
                </IconRow>
              </ChannelCol>
              <Knob
                w={94}
                h={72}
                cx={43}
                cy={44}
                value="2В"
                labels={VOLT_LABELS}
                ticks={[225, 180, 130, 62, 25, -45]}
                minor={[]}
                ring
                pointer={[26, 41]}
                labelColor="#111"
              />
            </ChannelGroup>

            <Group $w={105} $ml={3}>
              <Legend $x={7} $c="#000080">Частота</Legend>
              <Knob
                w={100}
                h={70}
                cx={47}
                cy={44}
                value="50K"
                labels={FREQ_LABELS}
                ticks={[225, 135, 90, 45, 15, -45]}
                minor={[200, 180, 160, 112, 68, 0, -20]}
                pointer={[32, 35]}
                labelColor="#4a4a40"
              />
            </Group>

            <Group $w={124} $ml={4}>
              <Legend $x={7} $c="#808080">Синхронизация</Legend>
              <SyncIcons>
                <EdgeIcon kind="rise" />
                <EdgeIcon kind="up" dim />
                <SmallTool $pressed><EdgeIcon kind="down" dim /></SmallTool>
                <EdgeIcon kind="cursor" />
              </SyncIcons>
              <SyncRow>
                <SyncSelect>2<Caret $s={4} $c="#aaa" /></SyncSelect>
                <PinchIcon />
              </SyncRow>
            </Group>

            <Group $w={133} $ml={6}>
              <Legend $x={5} $fs={13} $c="#a4b8d4">Управление</Legend>
              <ControlGrid>
                <ControlButton $off><PauseIcon /></ControlButton>
                <ControlButton><SineIcon /></ControlButton>
                <ControlButton $wave><WavesIcon /></ControlButton>
                <StartButton><PlayBig />Пуск</StartButton>
                <Elapsed>16.40</Elapsed>
              </ControlGrid>
            </Group>
          </Groups>
        </Panel>

        <StatusBar>
          <StatusCell>USB Осциллограф не подключен</StatusCell>
          <StatusRest />
        </StatusBar>
      </Window>
      <Taskbar>
        <TaskItem $ml={243} $w={43} />
        <TaskItem $ml={96} $w={41} />
        <TaskItem $ml={15} $w={31} />
      </Taskbar>
    </Page>
  );
}
